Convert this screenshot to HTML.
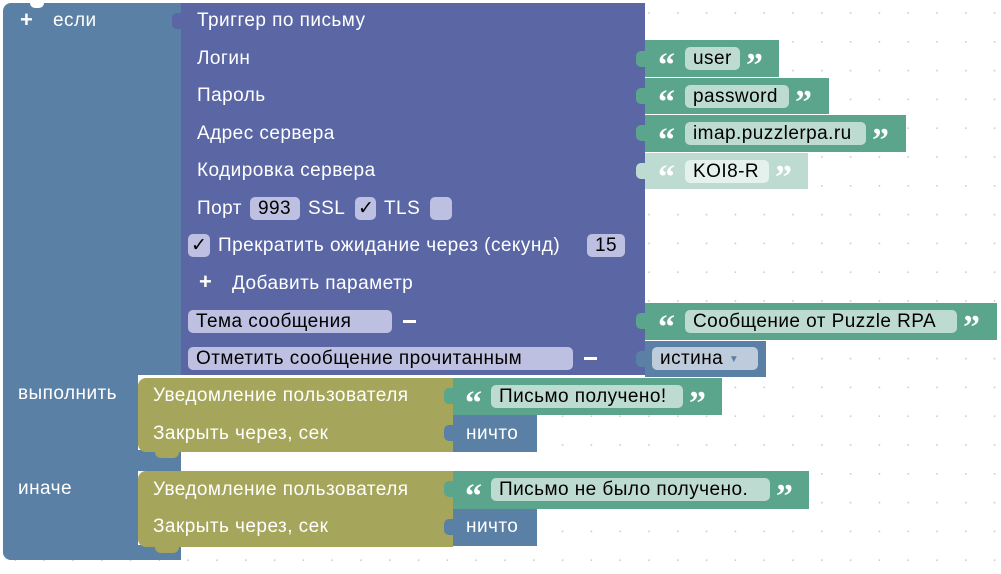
<!DOCTYPE html>
<html><head><meta charset="utf-8"><style>
body{margin:0;width:1001px;height:574px;overflow:hidden;background:#fff;font-family:"Liberation Sans",Arial,sans-serif;position:relative}
.a{position:absolute}
.t{position:absolute;color:#fff;font-size:19px;letter-spacing:0.45px;line-height:22px;white-space:nowrap}
.f{position:absolute;border-radius:5px;color:#000;font-size:19px;letter-spacing:0.45px;line-height:23px;white-space:nowrap;padding-left:8px;box-sizing:border-box}
.pf{background:#bdc0e0}
.gf{background:#bddbd0}
.q{position:absolute;color:#fff;font-size:34px;font-weight:bold;line-height:22px;font-family:"Liberation Serif",serif;top:0}
.tab{position:absolute;width:10px;height:16px;border-radius:5px 0 0 5px}
</style></head><body>
<svg class="a" style="left:0;top:0" width="1001" height="574"><defs><pattern id="p" x="649" y="13" width="28.8" height="28.8" patternUnits="userSpaceOnUse"><circle cx="0.8" cy="0.8" r="0.9" fill="#c8c8c8"/></pattern></defs><rect x="0" y="0" width="1001" height="574" fill="url(#p)" transform="translate(-0.8,-0.8)"/></svg>

<!-- if block -->
<div class="a" style="left:3px;top:3px;width:178px;height:372px;background:#5b80a5;border-radius:8px 0 0 0"></div>
<div class="a" style="left:3px;top:370px;width:135px;height:190px;background:#5b80a5;border-radius:0 0 0 8px"></div>
<div class="a" style="left:3px;top:450px;width:178px;height:21px;background:#5b80a5"></div>
<div class="a" style="left:3px;top:545px;width:178px;height:15px;background:#5b80a5;border-radius:0 0 0 8px"></div>
<div class="a" style="left:30px;top:3px;width:14px;height:5px;background:#fff;border-radius:0 0 6px 6px"></div>
<div class="t" style="left:20px;top:9px;font-weight:bold;font-size:22px">+</div>
<div class="t" style="left:53px;top:10px">если</div>
<div class="t" style="left:18px;top:383px">выполнить</div>
<div class="t" style="left:18px;top:478px">иначе</div>

<!-- purple block -->
<div class="a" style="left:181px;top:3px;width:464px;height:372px;background:#5b67a5"></div>
<div class="tab" style="left:172px;top:13px;background:#5b67a5"></div>
<div class="t" style="left:197px;top:10px">Триггер по письму</div>
<div class="t" style="left:197px;top:48px">Логин</div>
<div class="t" style="left:197px;top:85px">Пароль</div>
<div class="t" style="left:197px;top:123px">Адрес сервера</div>
<div class="t" style="left:197px;top:160px">Кодировка сервера</div>
<div class="t" style="left:197px;top:198px">Порт</div>
<div class="f pf" style="left:250px;top:197px;width:50px;height:23px">993</div>
<div class="t" style="left:308px;top:198px">SSL</div>
<div class="f pf" style="left:355px;top:197px;width:21px;height:23px;padding-left:3px">✓</div>
<div class="t" style="left:384px;top:198px">TLS</div>
<div class="f pf" style="left:430px;top:197px;width:22px;height:23px"></div>
<div class="f pf" style="left:188px;top:234px;width:22px;height:23px;padding-left:3px">✓</div>
<div class="t" style="left:218px;top:235px">Прекратить ожидание через (секунд)</div>
<div class="f pf" style="left:587px;top:234px;width:38px;height:23px">15</div>
<div class="t" style="left:199px;top:271px;font-weight:bold;font-size:22px">+</div>
<div class="t" style="left:232px;top:273px">Добавить параметр</div>
<div class="f pf" style="left:188px;top:310px;width:204px;height:23px">Тема сообщения</div>
<div class="a" style="left:403px;top:320px;width:13px;height:3px;background:#fff"></div>
<div class="f pf" style="left:188px;top:347px;width:385px;height:23px">Отметить сообщение прочитанным</div>
<div class="a" style="left:584px;top:357px;width:13px;height:3px;background:#fff"></div>

<!-- value blocks -->
<div class="a" style="left:645px;top:40px;width:134px;height:37px;background:#5ba58c"></div>
<div class="tab" style="left:636px;top:51px;background:#5ba58c"></div>
<div class="q" style="left:658px;top:55px">“</div><div class="f gf" style="left:685px;top:47px;width:55px;height:23px">user</div><div class="q" style="left:746px;top:55px">”</div>

<div class="a" style="left:645px;top:78px;width:184px;height:36px;background:#5ba58c"></div>
<div class="tab" style="left:636px;top:88px;background:#5ba58c"></div>
<div class="q" style="left:658px;top:92px">“</div><div class="f gf" style="left:685px;top:85px;width:104px;height:23px">password</div><div class="q" style="left:795px;top:92px">”</div>

<div class="a" style="left:645px;top:115px;width:261px;height:37px;background:#5ba58c"></div>
<div class="tab" style="left:636px;top:125px;background:#5ba58c"></div>
<div class="q" style="left:658px;top:130px">“</div><div class="f gf" style="left:685px;top:122px;width:181px;height:23px">imap.puzzlerpa.ru</div><div class="q" style="left:872px;top:130px">”</div>

<div class="a" style="left:645px;top:153px;width:163px;height:36px;background:#bedbd1"></div>
<div class="tab" style="left:636px;top:163px;background:#bedbd1"></div>
<div class="q" style="left:658px;top:167px">“</div><div class="f" style="left:685px;top:160px;width:84px;height:23px;background:#e4f1ec">KOI8-R</div><div class="q" style="left:775px;top:167px">”</div>

<div class="a" style="left:645px;top:303px;width:352px;height:37px;background:#5ba58c"></div>
<div class="tab" style="left:636px;top:313px;background:#5ba58c"></div>
<div class="q" style="left:658px;top:317px">“</div><div class="f gf" style="left:685px;top:310px;width:272px;height:23px">Сообщение от Puzzle RPA</div><div class="q" style="left:963px;top:317px">”</div>

<div class="a" style="left:645px;top:341px;width:121px;height:36px;background:#5b80a5"></div>
<div class="tab" style="left:636px;top:351px;background:#5b80a5"></div>
<div class="f" style="left:652px;top:347px;width:106px;height:23px;background:#bdcbdb">истина <span style="font-size:10px;color:#5b80a5;vertical-align:2px">▼</span></div>

<!-- olive 1 -->
<div class="a" style="left:138px;top:378px;width:315px;height:74px;background:#a5a55b;border-radius:8px 0 0 8px"></div>
<div class="a" style="left:155px;top:452px;width:24px;height:6px;background:#a5a55b;border-radius:0 0 6px 6px"></div>
<div class="t" style="left:153px;top:385px">Уведомление пользователя</div>
<div class="t" style="left:153px;top:423px">Закрыть через, сек</div>
<div class="a" style="left:453px;top:378px;width:269px;height:37px;background:#5ba58c"></div>
<div class="tab" style="left:444px;top:388px;background:#5ba58c"></div>
<div class="q" style="left:465px;top:393px">“</div><div class="f gf" style="left:491px;top:385px;width:192px;height:23px">Письмо получено!</div><div class="q" style="left:689px;top:393px">”</div>
<div class="a" style="left:453px;top:415px;width:84px;height:37px;background:#5b80a5"></div>
<div class="tab" style="left:444px;top:425px;background:#5b80a5"></div>
<div class="t" style="left:466px;top:423px">ничто</div>

<!-- olive 2 -->
<div class="a" style="left:138px;top:471px;width:315px;height:76px;background:#a5a55b;border-radius:8px 0 0 8px"></div>
<div class="a" style="left:155px;top:547px;width:24px;height:6px;background:#a5a55b;border-radius:0 0 6px 6px"></div>
<div class="t" style="left:153px;top:479px">Уведомление пользователя</div>
<div class="t" style="left:153px;top:516px">Закрыть через, сек</div>
<div class="a" style="left:453px;top:471px;width:356px;height:38px;background:#5ba58c"></div>
<div class="tab" style="left:444px;top:481px;background:#5ba58c"></div>
<div class="q" style="left:465px;top:486px">“</div><div class="f gf" style="left:491px;top:478px;width:279px;height:23px">Письмо не было получено.</div><div class="q" style="left:776px;top:486px">”</div>
<div class="a" style="left:453px;top:509px;width:84px;height:37px;background:#5b80a5"></div>
<div class="tab" style="left:444px;top:519px;background:#5b80a5"></div>
<div class="t" style="left:466px;top:516px">ничто</div>
</body></html>
